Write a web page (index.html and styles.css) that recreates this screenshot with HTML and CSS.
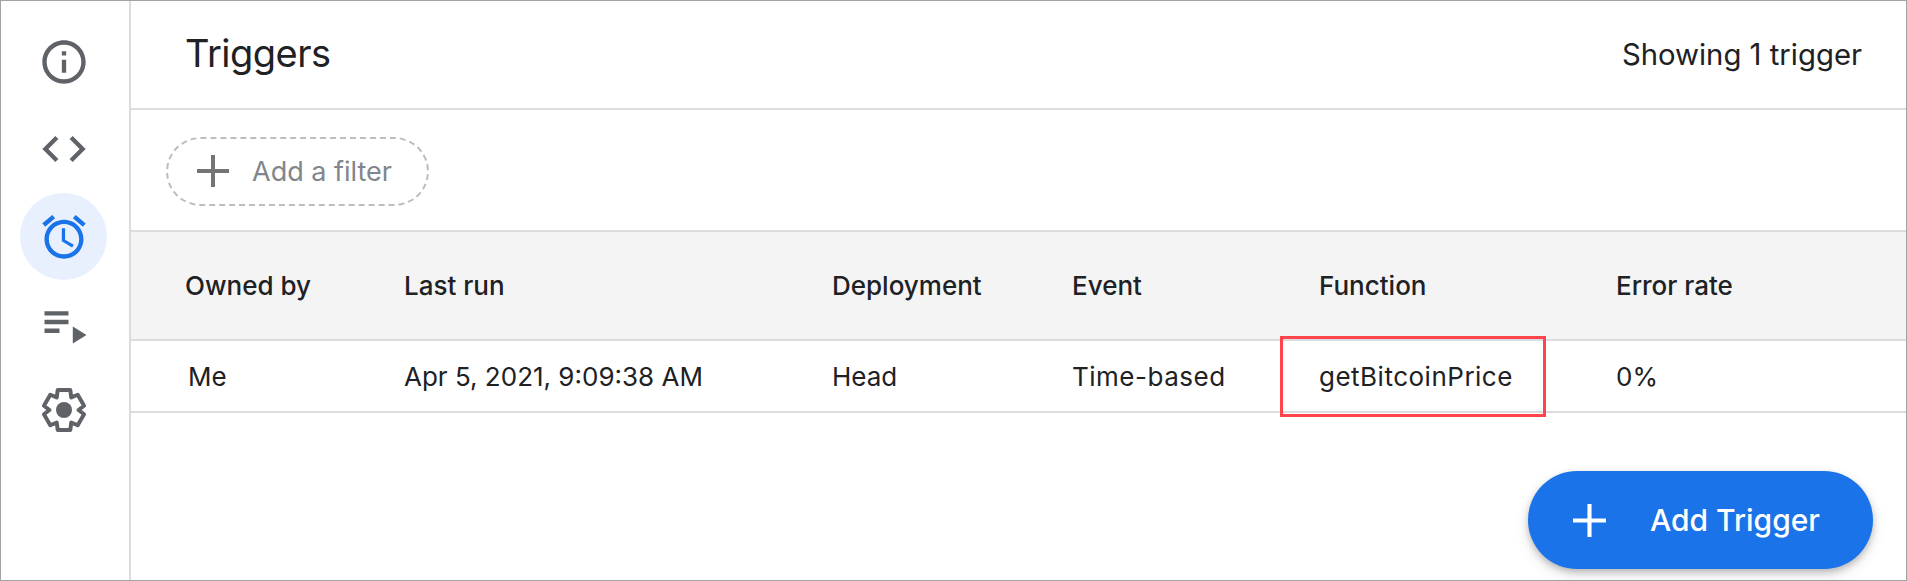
FILE: index.html
```html
<!DOCTYPE html>
<html lang="en">
<head>
<meta charset="utf-8">
<title>Triggers</title>
<link rel="stylesheet" href="styles.css">
</head>
<body>
<div class="app">
  <nav class="sidebar">
    <div class="nav-item">
      <svg class="icon" viewBox="0 0 24 24"><path d="M11 7h2v2h-2zm0 4h2v6h-2zm1-9C6.48 2 2 6.48 2 12s4.48 10 10 10 10-4.48 10-10S17.52 2 12 2zm0 18c-4.41 0-8-3.59-8-8s3.59-8 8-8 8 3.59 8 8-3.59 8-8 8z"/></svg>
    </div>
    <div class="nav-item">
      <svg class="icon" viewBox="0 0 24 24"><path d="M9.4 16.6L4.8 12l4.6-4.6L8 6l-6 6 6 6 1.4-1.4zm5.2 0l4.6-4.6-4.6-4.6L16 6l6 6-6 6-1.4-1.4z"/></svg>
    </div>
    <div class="nav-item active">
      <svg class="icon" viewBox="0 0 24 24"><path d="M22 5.72l-4.6-3.86-1.29 1.53 4.6 3.86L22 5.72zM7.88 3.39L6.6 1.86 2 5.71l1.29 1.53 4.59-3.85zM12.5 8H11v6l4.75 2.85.75-1.23-4-2.37V8zM12 4c-4.97 0-9 4.03-9 9s4.03 9 9 9 9-4.03 9-9-4.03-9-9-9zm0 16c-3.87 0-7-3.13-7-7s3.13-7 7-7 7 3.13 7 7-3.13 7-7 7z"/></svg>
    </div>
    <div class="nav-item">
      <svg class="icon" viewBox="0 0 52 52"><path d="M6.5 13.2h24v4.4h-24zM6.5 21.8h24v4.4h-24zM6.5 30.500h15v4.400h-15zM34.8 28.5l13.7 8.5-13.7 8.500z"/></svg>
    </div>
    <div class="nav-item">
      <svg class="icon" viewBox="-26 -25 52 52"><polygon class="gear" points="-6.3,-20 6.3,-20 7.25,-12.56 13.72,-15.23 20.05,-4.26 14.5,0 20.05,4.26 13.72,15.23 7.25,12.56 6.3,20 -6.3,20 -7.25,12.56 -13.72,15.23 -20.05,4.26 -14.5,0 -20.05,-4.26 -13.72,-15.23 -7.25,-12.56"/><circle r="8"/></svg>
    </div>
  </nav>
  <main class="main">
    <header class="header">
      <h1 class="title">Triggers</h1>
      <span class="count">Showing 1 trigger</span>
    </header>
    <div class="filters">
      <div class="filter-pill">
        <svg class="plus" viewBox="0 0 32 32"><path d="M14 0h4v14h14v4H18v14h-4V18H0v-4h14z"/></svg>
        <span>Add a filter</span>
      </div>
    </div>
    <div class="table">
      <div class="row head">
        <div>Owned by</div><div>Last run</div><div>Deployment</div><div>Event</div><div>Function</div><div>Error rate</div>
      </div>
      <div class="row body">
        <div class="owner">Me</div><div>Apr 5, 2021, 9:09:38 AM</div><div>Head</div><div class="wide">Time-based</div><div class="wide">getBitcoinPrice</div><div>0%</div>
      </div>
    </div>
    <div class="highlight"></div>
    <button class="fab">
      <svg class="fab-plus" viewBox="0 0 32 32"><path d="M14 0h4v14h14v4H18v14h-4V18H0v-4h14z"/></svg>
      <span>Add Trigger</span>
    </button>
  </main>
</div>
</body>
</html>
```
FILE: styles.css
```css
* { box-sizing: border-box; }
html, body { margin: 0; padding: 0; background: #fff; overflow: hidden; }
body { font-family: "Inter", "Lato", sans-serif; color: #202124; }

.app {
  display: flex;
  width: 1907px;
  height: 581px;
  border: 1px solid #a3a3a3;
}

.sidebar {
  flex: none;
  width: 130px;
  padding: 17px 3px 0 0;
  border-right: 2px solid #dadce0;
  display: flex;
  flex-direction: column;
}
.nav-item {
  flex: none;
  height: 87.5px;
  display: flex;
  align-items: center;
  justify-content: center;
}
.icon { width: 52px; height: 52px; fill: #5f6368; }
.gear { fill: none; stroke: #5f6368; stroke-width: 4; stroke-linejoin: round; }
.active {
  width: 87px;
  height: 87px;
  margin-left: 19px;
  border-radius: 50%;
  background: #e8f0fe;
}
.active .icon { fill: #1a73e8; }

.main { flex: 1; position: relative; min-width: 0; display: flex; flex-direction: column; }

.header {
  height: 109px;
  flex: none;
  border-bottom: 2px solid #dadce0;
  display: flex;
  align-items: center;
  justify-content: space-between;
  padding: 0 44px 0 54px;
}
.title { margin: 0 0 4px; font-size: 38px; font-weight: 400; letter-spacing: -0.5px; }
.count { font-size: 29.3px; }

.filters { height: 120px; flex: none; display: flex; align-items: center; padding: 2px 0 0 35px; }
.filter-pill {
  width: 263px;
  height: 69px;
  border: 2px dashed #bdbdbd;
  border-radius: 35px;
  display: flex;
  align-items: center;
  gap: 23px;
  padding-left: 29px;
  color: #80868b;
  font-size: 27px;
}
.plus { width: 32px; height: 32px; fill: #757575; flex: none; }

.row {
  display: grid;
  grid-template-columns: 219px 428px 240px 247px 297px 1fr;
  padding-left: 54px;
  align-items: center;
  font-size: 26px;
  border-bottom: 2px solid #dadce0;
}
.head { height: 111px; background: #f4f4f4; border-top: 2px solid #dadce0; font-weight: 500; }
.body { height: 72px; }
.owner { padding-left: 3px; }
.wide { letter-spacing: 0.5px; }

.highlight {
  position: absolute;
  left: 1149px;
  top: 335px;
  width: 266px;
  height: 81px;
  border: 3px solid #ff444c;
}

.fab {
  position: absolute;
  left: 1397px;
  top: 470px;
  width: 345px;
  height: 98px;
  border: 0;
  border-radius: 49px;
  background: #1a73e8;
  color: #fff;
  display: flex;
  align-items: center;
  gap: 44px;
  padding: 0 0 0 45px;
  font-family: inherit;
  font-size: 30px;
  font-weight: 500;
  box-shadow: 0 3px 6px rgba(0,0,0,.2), 0 6px 14px rgba(0,0,0,.12);
}
.fab-plus { width: 33px; height: 33px; fill: #fff; flex: none; }
```
